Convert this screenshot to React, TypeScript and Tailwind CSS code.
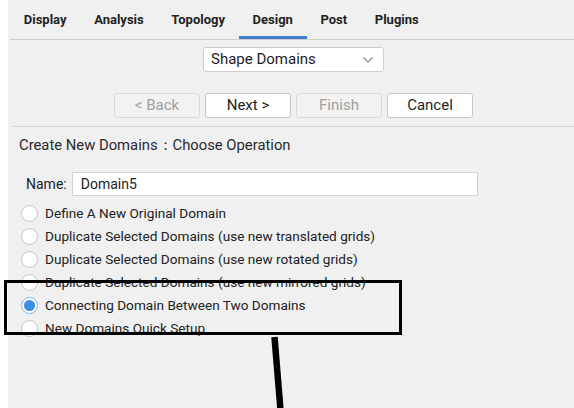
import React from "react";

const tabs = ["Display", "Analysis", "Topology", "Design", "Post", "Plugins"];

const options = [
  "Define A New Original Domain",
  "Duplicate Selected Domains (use new translated grids)",
  "Duplicate Selected Domains (use new rotated grids)",
  "Duplicate Selected Domains (use new mirrored grids)",
  "Connecting Domain Between Two Domains",
  "New Domains Quick Setup",
];

function Radio({ checked }: { checked: boolean }) {
  return checked ? (
    <span className="flex h-[17px] w-[17px] shrink-0 items-center justify-center rounded-full border border-[#7fb2ea] bg-white">
      <span className="h-[11px] w-[11px] rounded-full bg-[#3d8fe3]" />
    </span>
  ) : (
    <span className="h-[17px] w-[17px] shrink-0 rounded-full border border-[#c4c4c4] bg-white" />
  );
}

function Button({ label, disabled }: { label: string; disabled?: boolean }) {
  return (
    <div
      className={
        "flex h-[25px] w-[86px] items-center justify-center rounded-[3px] border text-[15px] " +
        (disabled
          ? "border-[#dadada] bg-[#f2f2f2] text-[#a0a0a0]"
          : "border-[#c6c6c6] bg-white text-[#1e1e1e]")
      }
    >
      {label}
    </div>
  );
}

export default function App() {
  return (
    <div
      className="relative h-[408px] w-[574px] overflow-hidden bg-white"
      style={{ fontFamily: "Roboto, 'Noto Sans', sans-serif" }}
    >
      <div className="ml-[8px] flex h-full flex-col bg-[#f0f0f0]">
        {/* tab strip */}
        <div className="ml-[2px] flex h-[40px] border-b border-[#cfcfcf]">
          {tabs.map((t) => (
            <div
              key={t}
              className={
                "flex items-center px-[13.8px] pt-[1px] text-[13px] font-bold text-[#222] " +
                (t === "Design" ? "border-b-[3px] border-[#3d7fd0] pt-[4px]" : "")
              }
            >
              {t}
            </div>
          ))}
        </div>

        {/* shape picker */}
        <div className="mt-[7px] flex justify-center pl-[5px]">
          <div className="flex h-[25px] w-[181px] items-center justify-between rounded-[3px] border border-[#cdcdcd] bg-white pl-[7px] pr-[9px] text-[15px] text-[#1e1e1e]">
            <span>Shape Domains</span>
            <svg width="12" height="8" viewBox="0 0 12 8" fill="none">
              <path d="M1.5 1.5 L6 6 L10.5 1.5" stroke="#8a8a8a" strokeWidth="1.2" />
            </svg>
          </div>
        </div>

        {/* wizard buttons */}
        <div className="ml-[106px] mt-[21px] flex gap-[5px]">
          <Button label="< Back" disabled />
          <Button label="Next >" />
          <Button label="Finish" disabled />
          <Button label="Cancel" />
        </div>

        <div className="ml-[5px] mt-[8px] border-t border-[#d3d3d3]" />

        <div className="ml-[11px] mt-[7px] text-[14.8px] text-[#2a2a2a]">
          Create New Domains：Choose Operation
        </div>

        {/* name field */}
        <div className="ml-[18px] mt-[16px] flex items-center gap-[5px] text-[14px] text-[#222]">
          <span>Name:</span>
          <div className="flex h-[24px] w-[406px] items-center border border-[#d4d4d4] bg-white pl-[8px]">
            Domain5
          </div>
        </div>

        {/* operation choices */}
        <div className="ml-[13px] mt-[6px] flex flex-col">
          {options.map((o, i) => (
            <div key={o} className="flex h-[23px] items-center gap-[7px] text-[13.6px] text-[#222]">
              <Radio checked={i === 4} />
              <span>{o}</span>
            </div>
          ))}
        </div>
      </div>

      {/* callout frame */}
      <div className="absolute left-[4px] top-[280px] h-[55px] w-[398px] border-[3px] border-black" />

      {/* callout pointer */}
      <svg className="absolute left-0 top-0" width="574" height="408">
        <line x1="274.5" y1="337" x2="280.5" y2="410" stroke="#000" strokeWidth="6.5" />
      </svg>
    </div>
  );
}
